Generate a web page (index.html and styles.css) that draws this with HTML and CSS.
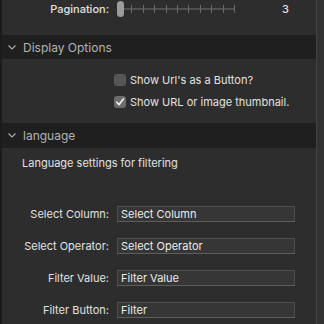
FILE: index.html
```html
<!DOCTYPE html>
<html lang="en">
<head>
    <meta charset="UTF-8">
    <title>Settings</title>
    <link rel="stylesheet" href="styles.css">
</head>
<body>
    <div class="frame">
        <div class="panel">
            <div class="row pagination">
                <div class="label">Pagination:</div>
                <div class="slider">
                    <div class="track">
                        <span class="tick"></span><span class="tick"></span><span class="tick"></span>
                        <span class="tick"></span><span class="tick"></span><span class="tick"></span>
                        <span class="tick"></span><span class="tick"></span><span class="tick"></span>
                        <span class="tick"></span><span class="tick"></span>
                    </div>
                    <div class="knob"></div>
                </div>
                <div class="value">3</div>
            </div>

            <div class="section-head first">
                <svg class="chevron" width="8" height="5" viewBox="0 0 8 5"><path d="M0.5 0.5 L4 4 L7.5 0.5" fill="none" stroke="#a8a8a8" stroke-width="1.2"/></svg>
                <span>Display Options</span>
            </div>
            <div class="options">
                <label class="check-row">
                    <span class="box"></span>
                    <span>Show Url's as a Button?</span>
                </label>
                <label class="check-row">
                    <span class="box checked">
                        <svg width="10" height="10" viewBox="0 0 10 10"><path d="M1.8 5.2 L4 7.6 L8.4 2" fill="none" stroke="#ececec" stroke-width="1.7" stroke-linecap="round" stroke-linejoin="round"/></svg>
                    </span>
                    <span>Show URL or image thumbnail.</span>
                </label>
            </div>

            <div class="section-head second">
                <svg class="chevron" width="8" height="5" viewBox="0 0 8 5"><path d="M0.5 0.5 L4 4 L7.5 0.5" fill="none" stroke="#a8a8a8" stroke-width="1.2"/></svg>
                <span>language</span>
            </div>
            <div class="desc">Language settings for filtering</div>

            <div class="form">
                <div class="row field">
                    <div class="label">Select Column:</div>
                    <div class="input">Select Column</div>
                </div>
                <div class="row field">
                    <div class="label">Select Operator:</div>
                    <div class="input">Select Operator</div>
                </div>
                <div class="row field">
                    <div class="label">Filter Value:</div>
                    <div class="input">Filter Value</div>
                </div>
                <div class="row field">
                    <div class="label">Filter Button:</div>
                    <div class="input">Filter</div>
                </div>
            </div>
        </div>
        <div class="scrollbar"></div>
    </div>
</body>
</html>
```

FILE: styles.css
```css
body {
    margin: 0;
    padding: 0;
    background-color: #2d2d2d;
    font-family: 'Inter', 'Liberation Sans', sans-serif;
    font-size: 11px;
    color: #e2e2e2;
}
.frame {
    display: flex;
    height: 324px;
    border-left: 2px solid #1b1b1b;
    box-sizing: border-box;
    overflow: hidden;
}
.panel {
    flex-grow: 1;
    display: flex;
    flex-direction: column;
}
.scrollbar {
    width: 7px;
    border-left: 1px solid #454545;
    background-color: #323232;
}
.row {
    display: flex;
    align-items: center;
}
.label {
    width: 115px;
    text-align: right;
    padding-right: 8px;
    box-sizing: border-box;
    flex-shrink: 0;
}
.pagination {
    height: 17px;
}
.pagination .label {
    font-weight: 500;
}
.slider {
    position: relative;
    width: 120px;
    height: 17px;
    display: flex;
    align-items: center;
}
.track {
    margin-left: 3px;
    width: 115px;
    height: 2px;
    background-color: #4f4f4f;
    display: flex;
    justify-content: space-between;
    align-items: center;
}
.tick {
    width: 1px;
    height: 8px;
    background-color: #6a6a6a;
}
.knob {
    position: absolute;
    left: 0;
    top: 1px;
    width: 7px;
    height: 16px;
    border-radius: 4px;
    background-color: #9c9c9c;
}
.value {
    margin-left: 45px;
    font-weight: 500;
}
.section-head {
    display: flex;
    align-items: center;
    gap: 7px;
    padding-left: 6px;
    background-color: #1f1f1f;
    color: #b3b3b3;
    font-size: 12px;
}
.section-head.first {
    margin-top: 18px;
    height: 24px;
}
.section-head.second {
    margin-top: 10px;
    height: 25px;
}
.options {
    padding-top: 10px;
    padding-left: 112px;
}
.check-row {
    height: 22px;
    display: flex;
    align-items: center;
    gap: 4px;
}
.box {
    width: 12px;
    height: 12px;
    border-radius: 3px;
    background-color: #565656;
    display: flex;
    align-items: center;
    justify-content: center;
}
.box.checked {
    background-color: #6b6b6b;
}
.desc {
    height: 30px;
    line-height: 30px;
    padding-left: 20px;
}
.form {
    padding-top: 28px;
    display: flex;
    flex-direction: column;
    gap: 16px;
}
.field {
    height: 16px;
}
.input {
    width: 178px;
    height: 16px;
    box-sizing: border-box;
    padding-left: 3px;
    line-height: 14px;
    background-color: #363636;
    border: 1px solid #4c4c4c;
    border-top-color: #505050;
    border-bottom-color: #5e5e5e;
    color: #ececec;
}
```
